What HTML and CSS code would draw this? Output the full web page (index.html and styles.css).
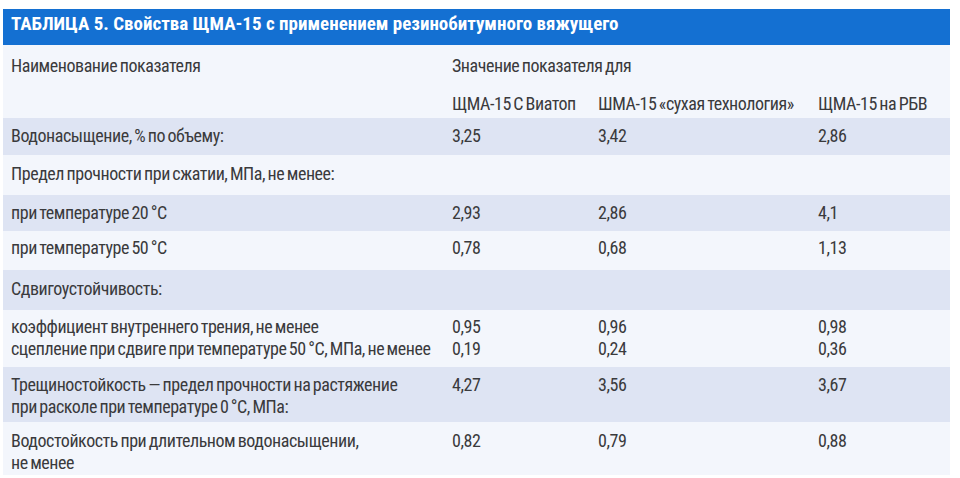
FILE: index.html
```html
<!DOCTYPE html>
<html lang="ru">
<head>
<meta charset="utf-8">
<title>Таблица 5</title>
<link rel="stylesheet" href="styles.css">
</head>
<body>
<div class="page">
  <div class="title">ТАБЛИЦА 5. Свойства ЩМА-15 с применением резинобитумного вяжущего</div>
  <table class="data">
    <colgroup>
      <col class="c1"><col class="c2"><col class="c3"><col class="c4">
    </colgroup>
    <tr class="r-h1">
      <td>Наименование показателя</td>
      <td colspan="3">Значение показателя для</td>
    </tr>
    <tr class="r-h2">
      <td></td>
      <td>ЩМА-15 С Виатоп</td>
      <td>ШМА-15 «сухая технология»</td>
      <td>ЩМА-15 на РБВ</td>
    </tr>
    <tr class="shade r-a">
      <td>Водонасыщение, % по объему:</td>
      <td>3,25</td><td>3,42</td><td>2,86</td>
    </tr>
    <tr class="r-b">
      <td>Предел прочности при сжатии, МПа, не менее:</td>
      <td></td><td></td><td></td>
    </tr>
    <tr class="shade r-c">
      <td>при температуре 20 °С</td>
      <td>2,93</td><td>2,86</td><td>4,1</td>
    </tr>
    <tr class="r-d">
      <td>при температуре 50 °С</td>
      <td>0,78</td><td>0,68</td><td>1,13</td>
    </tr>
    <tr class="shade r-b">
      <td>Сдвигоустойчивость:</td>
      <td></td><td></td><td></td>
    </tr>
    <tr class="r-e">
      <td>коэффициент внутреннего трения, не менее<br>сцепление при сдвиге при температуре 50 °С, МПа, не менее</td>
      <td>0,95<br>0,19</td><td>0,96<br>0,24</td><td>0,98<br>0,36</td>
    </tr>
    <tr class="shade r-f">
      <td>Трещиностойкость — предел прочности на растяжение<br>при расколе при температуре 0 °С, МПа:</td>
      <td>4,27</td><td>3,56</td><td>3,67</td>
    </tr>
    <tr class="r-g">
      <td>Водостойкость при длительном водонасыщении,<br>не менее</td>
      <td>0,82</td><td>0,79</td><td>0,88</td>
    </tr>
  </table>
</div>
</body>
</html>
```
FILE: styles.css
```css
html, body {
  margin: 0;
  padding: 0;
  background: #ffffff;
}
.page {
  width: 947px;
  margin-left: 3px;
  padding-top: 9px;
  font-family: "Liberation Sans Narrow", "Roboto Condensed", "Roboto", "Liberation Sans", sans-serif;
  color: #3a3a3c;
}
.title {
  height: 36px;
  box-sizing: border-box;
  background: #1470d2;
  color: #ffffff;
  font-weight: bold;
  font-size: 19px;
  line-height: 30px;
  padding-left: 8px;
  white-space: nowrap;
}
.data {
  width: 947px;
  border-collapse: collapse;
  table-layout: fixed;
  background: #f3f6fc;
  font-size: 18px;
  letter-spacing: -0.45px;
  word-spacing: -1.2px;
}
.c1 { width: 442px; }
.c2 { width: 146px; }
.c3 { width: 220px; }
.c4 { width: 139px; }
.data td {
  box-sizing: border-box;
  vertical-align: top;
  padding: 0 0 0 7px;
  line-height: 22px;
  white-space: nowrap;
}
.data td:first-child { padding-left: 8px; }
.shade { background: #dee4f3; }
.r-h1 td { height: 40px; padding-top: 10px; }
.r-h2 td { height: 33px; padding-top: 8px; }
.r-a td { height: 37px; padding-top: 7px; }
.r-b td { height: 40px; padding-top: 8px; }
.r-c td { height: 36px; padding-top: 7px; }
.r-d td { height: 39px; padding-top: 6px; }
.r-e td { height: 57px; padding-top: 6px; }
.r-f td { height: 55px; padding-top: 7px; }
.r-g td { height: 53px; padding-top: 8px; }
```
